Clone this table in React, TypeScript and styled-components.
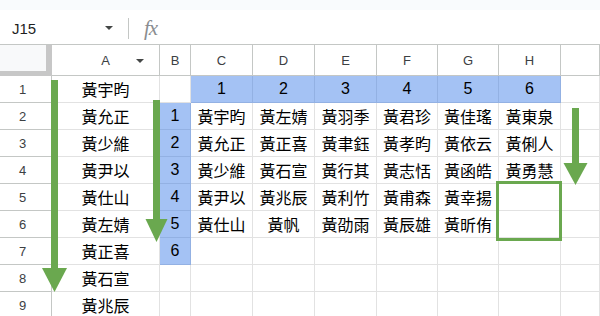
import React from 'react'
import styled, { createGlobalStyle } from 'styled-components'

const GlobalStyle = createGlobalStyle`
  html, body {
    margin: 0;
    padding: 0;
    background: #ffffff;
    overflow: hidden;
  }
  body {
    font-family: "Liberation Sans", "Noto Sans CJK TC", sans-serif;
  }
`

const GREEN = '#6aa84f'
const BLUE = '#a4c2f4'

const STSheet = styled.div`
  position: relative;
  width: 600px;
  height: 316px;
  overflow: hidden;
  background: #ffffff;
`

const STTopStrip = styled.div`
  height: 10px;
  background: #f9fbfd;
`

const STFormulaBar = styled.div`
  display: flex;
  align-items: center;
  height: 35px;
  padding-top: 2px;
  box-sizing: border-box;
  background: #ffffff;
  border-bottom: 1px solid #c4c7c5;
`

const STNameBox = styled.div`
  display: flex;
  align-items: center;
  justify-content: space-between;
  width: 113px;
  padding-left: 12px;
  box-sizing: border-box;
  font-size: 15px;
  color: #1f1f1f;
`

const STCaret = styled.span`
  width: 0;
  height: 0;
  border-left: 4px solid transparent;
  border-right: 4px solid transparent;
  border-top: 4px solid #444746;
`

const STDivider = styled.div`
  width: 1px;
  height: 21px;
  margin: 0 15px 0 15px;
  background: #c4c7c5;
`

const STFx = styled.span`
  font-family: "Liberation Serif", "DejaVu Serif", serif;
  font-style: italic;
  font-size: 21px;
  color: #8a8d90;
  letter-spacing: -1px;
`

const STGrid = styled.div`
  display: grid;
  grid-template-columns: 52px 108px 31px 62px 62px 62px 61px 61px 62px 1fr;
  grid-template-rows: 31px;
  grid-auto-rows: 27px;
`

const STCorner = styled.div`
  box-sizing: border-box;
  background: #f8f9fa;
  border-right: 6px solid #c7c7c7;
  border-bottom: 5px solid #c7c7c7;
`

const STColHead = styled.div<{ $caret?: boolean }>`
  position: relative;
  display: flex;
  align-items: center;
  justify-content: center;
  box-sizing: border-box;
  border-right: 1px solid #c4c7c5;
  border-bottom: 1px solid #c4c7c5;
  font-size: 13px;
  color: #3c4043;

  ${(p) => p.$caret && `
    &::after {
      content: '';
      position: absolute;
      right: 15px;
      top: 14px;
      border-left: 4px solid transparent;
      border-right: 4px solid transparent;
      border-top: 4px solid #444746;
    }
  `}
`

const STRowHead = styled.div`
  display: flex;
  align-items: center;
  justify-content: center;
  box-sizing: border-box;
  padding-right: 6px;
  border-right: 1px solid #c4c7c5;
  border-bottom: 1px solid #c4c7c5;
  font-size: 13px;
  color: #3c4043;
`

const STCell = styled.div<{ $fill?: boolean; $active?: boolean }>`
  position: relative;
  display: flex;
  align-items: center;
  justify-content: center;
  box-sizing: border-box;
  white-space: nowrap;
  overflow: ${(p) => (p.$active ? 'visible' : 'hidden')};
  background: ${(p) => (p.$fill ? BLUE : '#ffffff')};
  border-right: 1px solid ${(p) => (p.$fill ? '#93b1e3' : '#e2e2e2')};
  border-bottom: 1px solid ${(p) => (p.$fill ? '#93b1e3' : '#e2e2e2')};
  font-size: 16px;
  color: #000000;
`

// green range outline over H5:H6, drawn from the top cell
const STSelection = styled.div<{ $span: number }>`
  position: absolute;
  left: -3px;
  top: -3px;
  width: 66px;
  height: ${(p) => p.$span * 27 + 6}px;
  box-sizing: border-box;
  border: 3px solid ${GREEN};
  z-index: 2;
  pointer-events: none;
`

const STArrows = styled.svg`
  position: absolute;
  left: 0;
  top: 0;
  z-index: 3;
  pointer-events: none;
`

const LETTERS = ['A', 'B', 'C', 'D', 'E', 'F', 'G', 'H', '']

const NAMES_A = ['黃宇昀', '黃允正', '黃少維', '黃尹以', '黃仕山', '黃左婧', '黃正喜', '黃石宣', '黃兆辰', '']

const TABLE = [
  ['黃宇昀', '黃左婧', '黃羽季', '黃君珍', '黃佳瑤', '黃東泉'],
  ['黃允正', '黃正喜', '黃聿鈺', '黃孝昀', '黃依云', '黃俐人'],
  ['黃少維', '黃石宣', '黃行其', '黃志恬', '黃函皓', '黃勇慧'],
  ['黃尹以', '黃兆辰', '黃利竹', '黃甫森', '黃幸揚', ''],
  ['黃仕山', '黃帆', '黃劭雨', '黃辰雄', '黃昕侑', ''],
]

interface IArrow {
  cx: number
  top: number
  head: number
  tip: number
  half: number
}

const ARROWS: IArrow[] = [
  { cx: 54.5, top: 80, head: 268, tip: 292, half: 12.5 },
  { cx: 156.5, top: 100, head: 219, tip: 242, half: 11 },
  { cx: 575.5, top: 108, head: 163, tip: 185, half: 12 },
]

const Arrow = ({ cx, top, head, tip, half }: IArrow) => (
  <g fill={GREEN}>
    <rect x={cx - 3.5} y={top} width={7} height={head - top + 1} />
    <polygon points={`${cx - half},${head} ${cx + half},${head} ${cx},${tip}`} />
  </g>
)

// row r (1-based), column index c (0 = A)
const cellValue = (r: number, c: number): { text: string; fill: boolean } => {
  if (c === 0) return { text: NAMES_A[r - 1] ?? '', fill: false }
  if (c === 1) {
    if (r >= 2 && r <= 7) return { text: String(r - 1), fill: true }
    return { text: '', fill: false }
  }
  if (c >= 2 && c <= 7) {
    if (r === 1) return { text: String(c - 1), fill: true }
    const row = TABLE[r - 2]
    return { text: row ? row[c - 2] : '', fill: false }
  }
  return { text: '', fill: false }
}

const ROWS = [1, 2, 3, 4, 5, 6, 7, 8, 9, 10]

export default function App(): JSX.Element {
  return (
    <STSheet>
      <GlobalStyle />
      <STTopStrip />
      <STFormulaBar>
        <STNameBox>
          J15
          <STCaret />
        </STNameBox>
        <STDivider />
        <STFx>fx</STFx>
      </STFormulaBar>

      <STGrid>
        <STCorner />
        {LETTERS.map((l, i) => (
          <STColHead key={`h${i}`} $caret={l === 'A'}>{l}</STColHead>
        ))}

        {ROWS.map((r) => (
          <React.Fragment key={r}>
            <STRowHead>{r}</STRowHead>
            {LETTERS.map((_, c) => {
              const v = cellValue(r, c)
              const active = r === 5 && c === 7
              return (
                <STCell key={c} $fill={v.fill} $active={active}>
                  {v.text}
                  {active && <STSelection $span={2} />}
                </STCell>
              )
            })}
          </React.Fragment>
        ))}
      </STGrid>

      <STArrows width={600} height={316} viewBox="0 0 600 316">
        {ARROWS.map((a, i) => (
          <Arrow key={i} {...a} />
        ))}
      </STArrows>
    </STSheet>
  )
}
